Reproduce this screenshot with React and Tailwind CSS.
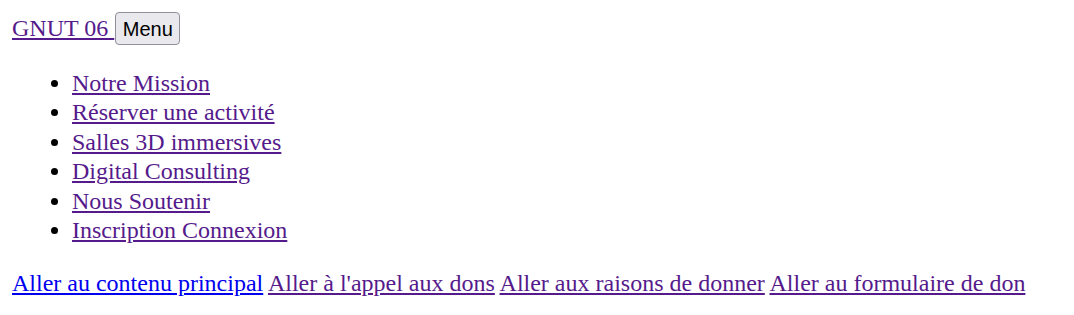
export default function App() {
  const links = [
    'Notre Mission',
    'Réserver une activité',
    'Salles 3D immersives',
    'Digital Consulting',
    'Nous Soutenir',
    'Inscription Connexion'
  ];
  return (
    <div className="bg-white min-h-[315px] p-[12px] text-black text-[24px] font-['Liberation_Serif',serif]">
      <div className="flex items-center h-[33px]">
        <a href="#" className="text-[#551a8b] underline leading-[29.4px]">GNUT 06&nbsp;</a>
        <button className="ml-[1px] w-[65px] h-[33px] bg-[#e9e9ed] border border-[#8f8f9d] rounded-[4px] text-[20px] text-black font-['Liberation_Sans',sans-serif] leading-none">
          Menu
        </button>
      </div>
      <ul className="list-disc pl-[60px] my-[24px] leading-[29.4px]">
        {links.map(l => (
          <li key={l}>
            <a href="#" className="text-[#551a8b] underline">{l}</a>
          </li>
        ))}
      </ul>
      <div className="leading-[29.4px]">
        <a href="#" className="text-[#0000ee] underline">Aller au contenu principal</a>{' '}
        <a href="#" className="text-[#551a8b] underline">Aller à l'appel aux dons</a>{' '}
        <a href="#" className="text-[#551a8b] underline">Aller aux raisons de donner</a>{' '}
        <a href="#" className="text-[#551a8b] underline">Aller au formulaire de don</a>
      </div>
    </div>
  );
}
